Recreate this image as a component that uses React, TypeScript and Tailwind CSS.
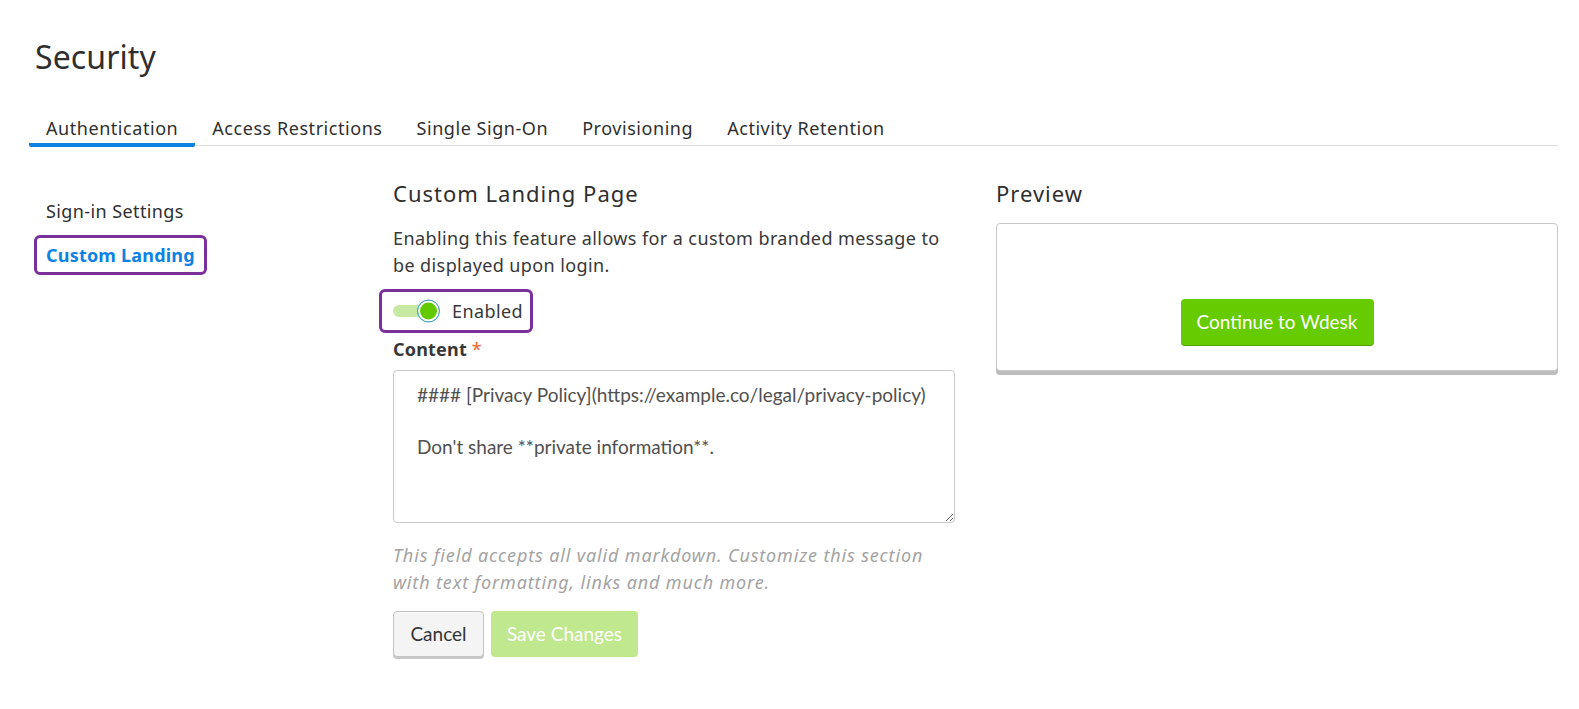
import React from "react";

const sans = { fontFamily: '"Noto Sans", "Open Sans", sans-serif' };
const lato = { fontFamily: 'Lato, "Noto Sans", sans-serif' };

export default function App() {
  const tabs = ["Authentication", "Access Restrictions", "Single Sign-On", "Provisioning", "Activity Retention"];
  return (
    <div className="min-h-[709px] w-full bg-white text-[#383838] tracking-[0.4px]" style={sans}>
      <div className="pl-[29px] pr-[21px]">
        <h1 className="pt-[37px] pl-[6px] text-[32px] leading-[40px] font-normal tracking-[0.1px] text-[#2f2f2f]">Security</h1>
        <div className="mt-[39px] flex border-b border-[#dcdcdc]">
          {tabs.map((t, i) => (
            <div
              key={t}
              className={
                i === 0
                  ? "mb-[-2px] border-b-4 border-[#0c82e4] px-[17px] pb-[3px] text-[18px] leading-[24px] tracking-[0.55px] text-[#2f2f2f] rounded-b-[2px]"
                  : "mb-[-2px] border-b-4 border-transparent px-[17px] pb-[3px] text-[18px] leading-[24px] tracking-[0.55px] text-[#2f2f2f]"
              }
            >
              {t}
            </div>
          ))}
        </div>
      </div>

      <div className="flex pl-[34px] pr-[21px] pt-[33px]">
        {/* left nav */}
        <div className="w-[359px] shrink-0 pt-[12px] flex flex-col gap-[4px]">
          <div className="w-fit h-[40px] flex items-center border-2 border-transparent px-[10px] text-[18px] text-[#2f2f2f]">
            Sign-in Settings
          </div>
          <div className="w-[173px] h-[40px] flex items-center rounded-[6px] border-[3px] border-[#7b2f9a] px-[9px] text-[18px] font-bold tracking-[0.2px] text-[#0c82e4]">
            Custom Landing
          </div>
        </div>

        {/* middle */}
        <div className="w-[562px] shrink-0">
          <h2 className="text-[22px] leading-[28px] font-normal tracking-[1px] text-[#2f2f2f]">Custom Landing Page</h2>
          <p className="mt-[18px] w-[550px] text-[18px] leading-[27px] text-[#383838]">
            Enabling this feature allows for a custom branded message to be displayed upon login.
          </p>
          <div className="mt-[10px] ml-[-14px] w-[154px] h-[44px] flex items-center rounded-[6px] border-[3px] border-[#7b2f9a] pl-[11px]">
            <div className="relative w-[41px] h-[12px] rounded-full bg-[#c6eaa3]">
              <div className="absolute right-[-6px] top-1/2 -translate-y-1/2 w-[23px] h-[23px] rounded-full bg-[#63c900] border border-[#3f9cf0] ring-2 ring-white ring-inset"></div>
            </div>
            <span className="ml-[18px] text-[18px] text-[#383838]">Enabled</span>
          </div>
          <div className="mt-[4px] text-[18px] leading-[24px] font-bold tracking-[0.2px] text-[#383838]">
            Content <span className="font-normal text-[#f0622d]">*</span>
          </div>
          <textarea
            className="mt-[9px] block w-[562px] h-[153px] rounded-[4px] border border-[#c9c9c9] pl-[23px] pr-[10px] pt-[11px] text-[19px] leading-[26px] tracking-normal text-[#505050] outline-none"
            style={lato}
            defaultValue={"#### [Privacy Policy](https://example.co/legal/privacy-policy)\n\nDon't share **private information**."}
          />
          <p className="mt-[19px] w-[545px] text-[18px] leading-[27px] italic tracking-[0.85px] text-[#a3a3a3]">
            This field accepts all valid markdown. Customize this section with text formatting, links and much more.
          </p>
          <div className="mt-[15px] flex gap-[7px]" style={lato}>
            <button className="w-[91px] h-[46px] rounded-[4px] border border-[#c4c4c4] bg-[#f4f4f4] text-[19px] tracking-normal text-[#333] shadow-[0_2px_0_#c8c8c8]">
              Cancel
            </button>
            <button className="w-[147px] h-[46px] rounded-[4px] bg-[#bfe88f] text-[19px] tracking-normal text-white">
              Save Changes
            </button>
          </div>
        </div>

        {/* preview */}
        <div className="ml-[41px] flex-1">
          <h2 className="text-[22px] leading-[28px] font-normal tracking-[1px] text-[#2f2f2f]">Preview</h2>
          <div className="mt-[16px] h-[148px] rounded-[4px] border border-[#c9c9c9] bg-white shadow-[0_4px_0_#bdbdbd] flex justify-center pt-[75px]">
            <button
              className="w-[193px] h-[46px] rounded-[4px] bg-[#66cb00] text-[19px] tracking-normal text-white shadow-[0_1px_0_#4fa300]"
              style={lato}
            >
              Continue to Wdesk
            </button>
          </div>
        </div>
      </div>
    </div>
  );
}
